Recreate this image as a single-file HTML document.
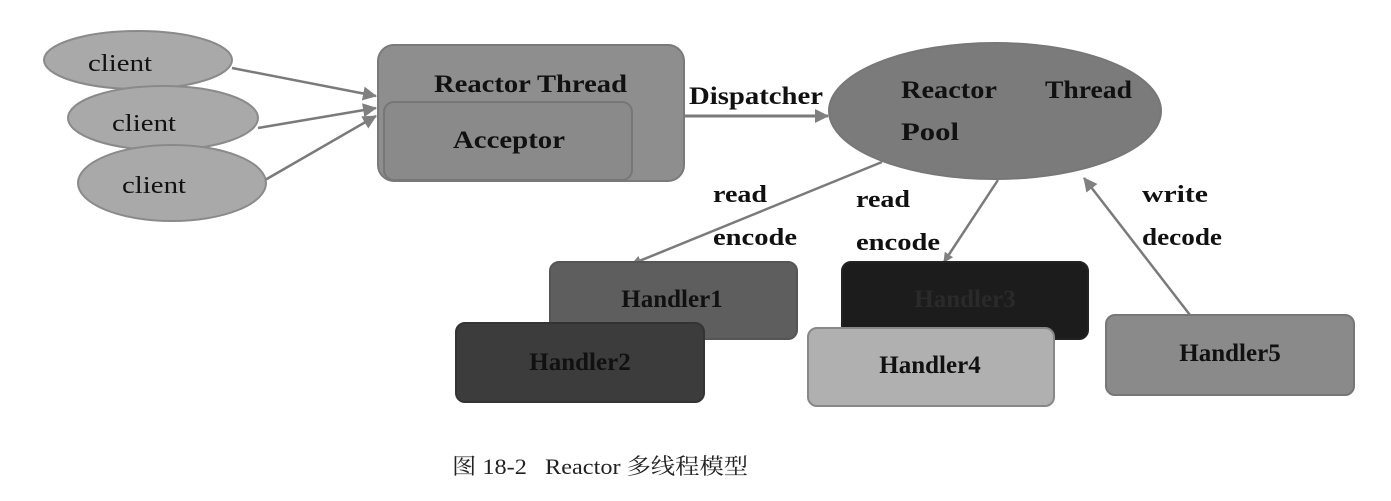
<!DOCTYPE html>
<html><head><meta charset="utf-8"><style>
html,body{margin:0;padding:0;background:#fff;width:1391px;height:501px;overflow:hidden}
svg text{font-family:"Liberation Serif",serif;font-weight:bold;fill:#111}
</style></head><body>
<svg width="1391" height="501" viewBox="0 0 1391 501" xmlns="http://www.w3.org/2000/svg">
<defs>
<marker id="a" markerWidth="10" markerHeight="10" refX="9" refY="5" orient="auto" markerUnits="userSpaceOnUse"><path d="M0,0 L10,5 L0,10 z" fill="#808080"/></marker>
<marker id="b" markerWidth="14" markerHeight="14" refX="13" refY="7" orient="auto" markerUnits="userSpaceOnUse"><path d="M0,0 L14,7 L0,14 z" fill="#808080"/></marker>
</defs>
<g stroke="#7a7a7a" stroke-width="2.5" fill="none">
<line x1="232" y1="68" x2="376" y2="96" marker-end="url(#b)"/>
<line x1="258" y1="128" x2="376" y2="108" marker-end="url(#b)"/>
<line x1="265" y1="180" x2="376" y2="116" marker-end="url(#b)"/>
</g>
<ellipse cx="138" cy="60" rx="94" ry="29" fill="#a9a9a9" stroke="#8a8a8a" stroke-width="2"/>
<ellipse cx="163" cy="118" rx="95" ry="32" fill="#a9a9a9" stroke="#8a8a8a" stroke-width="2"/>
<ellipse cx="172" cy="183" rx="94" ry="38" fill="#a9a9a9" stroke="#8a8a8a" stroke-width="2"/>
<text x="88" y="71" font-size="24" style="font-weight:normal" textLength="64" lengthAdjust="spacingAndGlyphs">client</text>
<text x="112" y="131" font-size="24" style="font-weight:normal" textLength="64" lengthAdjust="spacingAndGlyphs">client</text>
<text x="122" y="193" font-size="24" style="font-weight:normal" textLength="64" lengthAdjust="spacingAndGlyphs">client</text>

<rect x="378" y="45" width="306" height="136" rx="16" fill="#8e8e8e" stroke="#7a7a7a" stroke-width="2"/>
<rect x="384" y="102" width="248" height="78" rx="10" fill="#8a8a8a" stroke="#777" stroke-width="2"/>
<text x="434" y="92" font-size="25" textLength="193" lengthAdjust="spacingAndGlyphs">Reactor Thread</text>
<text x="453" y="148" font-size="25" textLength="112" lengthAdjust="spacingAndGlyphs">Acceptor</text>

<line x1="684" y1="116" x2="828" y2="116" stroke="#7a7a7a" stroke-width="3" marker-end="url(#b)"/>
<text x="689" y="104" font-size="25" textLength="134" lengthAdjust="spacingAndGlyphs">Dispatcher</text>

<ellipse cx="995" cy="111" rx="166" ry="68" fill="#7b7b7b" stroke="#777" stroke-width="2"/>
<text x="901" y="98" font-size="25" textLength="96" lengthAdjust="spacingAndGlyphs">Reactor</text>
<text x="1045" y="98" font-size="25" textLength="87" lengthAdjust="spacingAndGlyphs">Thread</text>
<text x="901" y="140" font-size="25" textLength="58" lengthAdjust="spacingAndGlyphs">Pool</text>

<g stroke="#7a7a7a" stroke-width="2.5" fill="none">
<line x1="882" y1="162" x2="632" y2="264" marker-end="url(#a)"/>
<line x1="998" y1="180" x2="944" y2="262" marker-end="url(#a)"/>
<line x1="1190" y1="315" x2="1084" y2="178" marker-end="url(#b)"/>
</g>
<text x="713" y="202" font-size="24" textLength="54" lengthAdjust="spacingAndGlyphs">read</text>
<text x="713" y="245" font-size="24" textLength="84" lengthAdjust="spacingAndGlyphs">encode</text>
<text x="856" y="207" font-size="24" textLength="54" lengthAdjust="spacingAndGlyphs">read</text>
<text x="856" y="250" font-size="24" textLength="84" lengthAdjust="spacingAndGlyphs">encode</text>
<text x="1142" y="202" font-size="24" textLength="66" lengthAdjust="spacingAndGlyphs">write</text>
<text x="1142" y="245" font-size="24" textLength="80" lengthAdjust="spacingAndGlyphs">decode</text>

<rect x="550" y="262" width="247" height="77" rx="9" fill="#5e5e5e" stroke="#555" stroke-width="2"/>
<rect x="456" y="323" width="248" height="79" rx="9" fill="#3c3c3c" stroke="#333" stroke-width="2"/>
<rect x="842" y="262" width="246" height="77" rx="9" fill="#1c1c1c" stroke="#222" stroke-width="2"/>
<rect x="808" y="328" width="246" height="78" rx="9" fill="#b0b0b0" stroke="#888" stroke-width="2"/>
<rect x="1106" y="315" width="248" height="80" rx="9" fill="#8a8a8a" stroke="#777" stroke-width="2"/>
<text x="672" y="307" font-size="25" text-anchor="middle" style="fill:#111">Handler1</text>
<text x="580" y="370" font-size="25" text-anchor="middle" style="fill:#111">Handler2</text>
<text x="965" y="307" font-size="25" text-anchor="middle" style="fill:#2a2a2a">Handler3</text>
<text x="930" y="373" font-size="25" text-anchor="middle">Handler4</text>
<text x="1230" y="361" font-size="25" text-anchor="middle">Handler5</text>

<text x="452" y="474" font-size="22" style="font-weight:normal;font-family:'Liberation Serif','Noto Serif CJK SC',serif;fill:#222" textLength="296" lengthAdjust="spacingAndGlyphs">图 18-2&#160;&#160;&#160;Reactor 多线程模型</text>
</svg>
</body></html>
